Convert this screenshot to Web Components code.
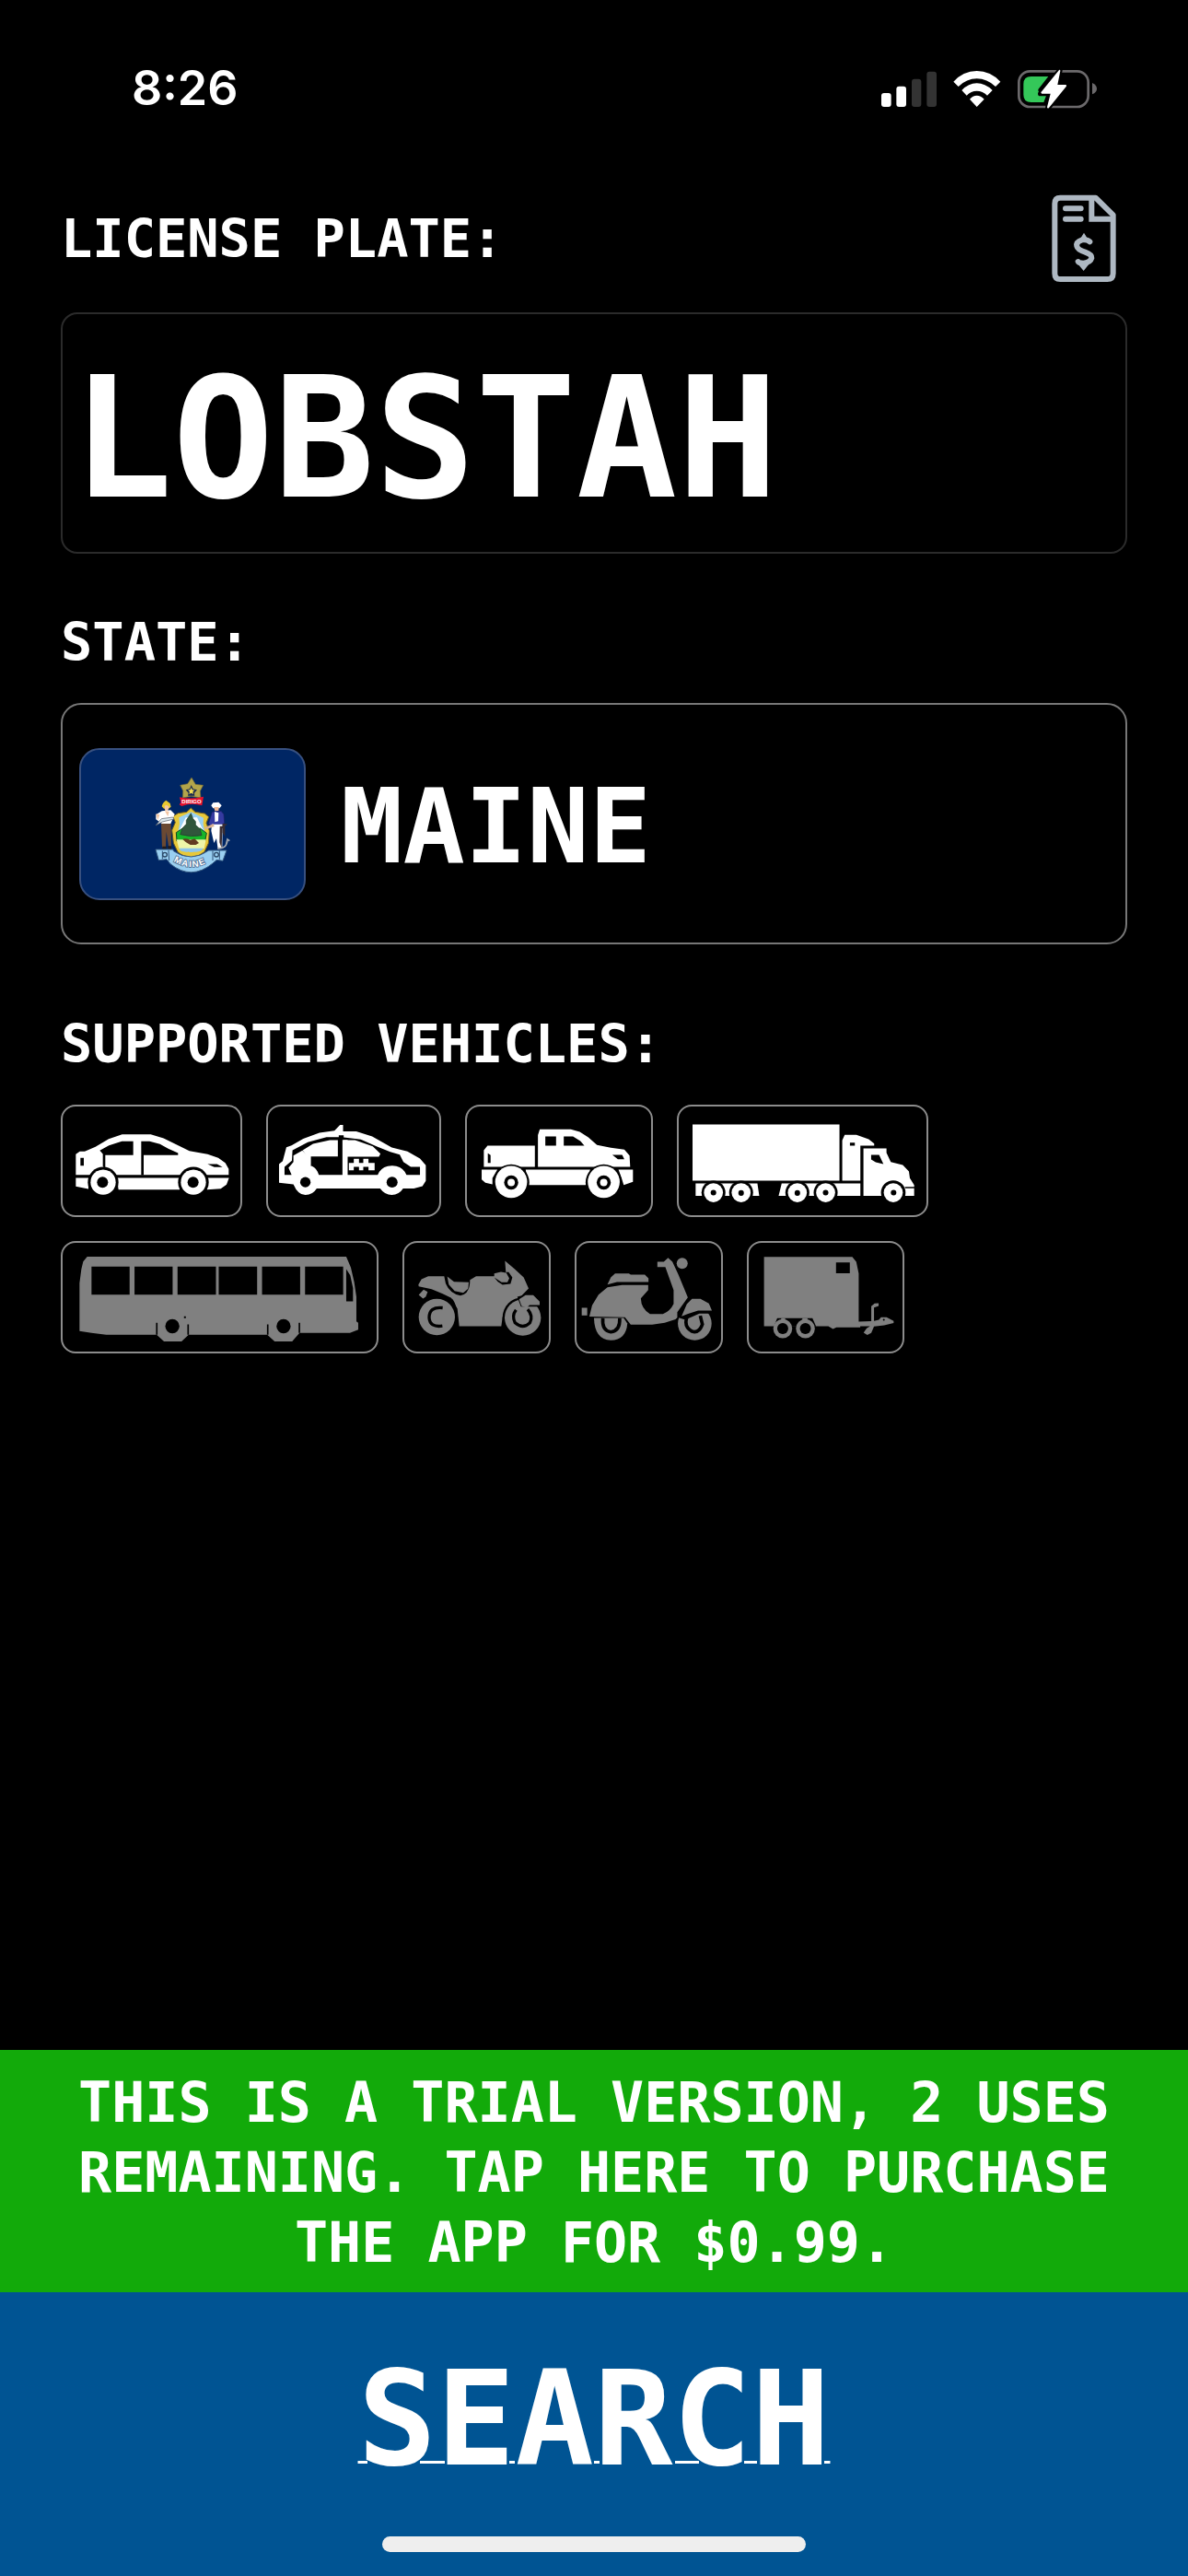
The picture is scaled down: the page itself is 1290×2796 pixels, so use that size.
<!DOCTYPE html>
<html lang="en">
<head>
<meta charset="utf-8">
<meta name="viewport" content="width=device-width, initial-scale=1">
<title>License Plate Search</title>
<style>
    body {
        margin: 0;
        background: #000;
        color: #fff;
        font-family: "DejaVu Sans Mono", monospace;
        font-weight: bold;
    }
</style>
</head>
<body>
<plate-app>
    <status-bar slot="status">8:26</status-bar>
    <plate-input value="LOBSTAH">LICENSE PLATE:</plate-input>
    <state-picker state="MAINE">STATE:</state-picker>
    <vehicle-list>
        SUPPORTED VEHICLES:
        <vehicle-card slot="cards" type="car"></vehicle-card>
        <vehicle-card slot="cards" type="taxi"></vehicle-card>
        <vehicle-card slot="cards" type="pickup"></vehicle-card>
        <vehicle-card slot="cards" type="semi"></vehicle-card>
        <vehicle-card slot="cards" type="bus" disabled></vehicle-card>
        <vehicle-card slot="cards" type="motorcycle" disabled></vehicle-card>
        <vehicle-card slot="cards" type="scooter" disabled></vehicle-card>
        <vehicle-card slot="cards" type="trailer" disabled></vehicle-card>
    </vehicle-list>
    <trial-banner slot="footer">THIS IS A TRIAL VERSION, 2 USES REMAINING. TAP HERE TO PURCHASE THE APP FOR $0.99.</trial-banner>
    <search-bar slot="footer">SEARCH</search-bar>
</plate-app>

<script>
    class PlateApp extends HTMLElement {
        constructor() {
            super();
            this.attachShadow({ mode: 'open' });
            this.shadowRoot.innerHTML = `
                <style>
                    :host {
                        display: flex;
                        flex-direction: column;
                        min-height: 100vh;
                    }

                    main {
                        flex: 1;
                        display: flex;
                        flex-direction: column;
                        gap: 56px;
                        padding: 63px 66px;
                    }
                </style>
                <slot name="status"></slot>
                <main><slot></slot></main>
                <slot name="footer"></slot>
            `;
        }
    }

    class StatusBar extends HTMLElement {
        constructor() {
            super();
            this.attachShadow({ mode: 'open' });
            this.shadowRoot.innerHTML = `
                <style>
                    :host {
                        display: flex;
                        justify-content: space-between;
                        align-items: center;
                        padding: 64px 99px 0 143px;
                        font: 600 52px/64px Inter, sans-serif;
                    }

                    svg {
                        display: block;
                    }
                </style>
                <slot></slot>
                <svg width="234" height="43" viewBox="81 42 702 129" role="img" aria-label="Signal, Wi-Fi, battery charging">
                    <g fill="#fff">
                        <rect x="81" y="120" width="32" height="45" rx="9"/>
                        <rect x="130" y="98" width="32" height="67" rx="9"/>
                        <rect x="180" y="74" width="31" height="91" rx="9" fill="#333"/>
                        <rect x="229" y="50" width="32" height="115" rx="9" fill="#333"/>
                        <path d="M316 83Q348 48 392 48T469 83L453 99Q425 73 392 73T332 99Z"/>
                        <path d="M343 111Q365 88 392 88T443 111L426 128Q411 113 392 113T359 128Z"/>
                        <path d="M369 140Q379 128 392 128T416 140L392 165Z"/>
                    </g>
                    <rect x="529" y="49" width="226" height="116" rx="36" fill="none" stroke="#6b696b" stroke-width="8"/>
                    <path d="M768 87Q783 94 783 106T768 124Z" fill="#6b696b"/>
                    <path d="M569 66H625L592 108Q590 121 611 122L619 126L610 150H569Q544 150 544 125V91Q544 66 569 66Z" fill="#34c759"/>
                    <path d="M663 45L655 90H686L623 171L630 122H599Z" fill="#fff" stroke="#000" stroke-width="16" stroke-linejoin="round"/>
                    <path d="M660 45Q664 43 664 48L655 93H682Q686 95 683 99L627 168Q622 172 621 166L632 122H604Q598 119 604 114Z" fill="#fff"/>
                </svg>
            `;
        }
    }

    class PlateInput extends HTMLElement {
        constructor() {
            super();
            this.attachShadow({ mode: 'open' });
            this.shadowRoot.innerHTML = `
                <style>
                    :host {
                        display: block;
                    }

                    .top {
                        display: flex;
                        justify-content: space-between;
                        align-items: center;
                        margin-bottom: 20px;
                        padding: 20px 12px 12px 0;
                    }

                    label {
                        font-size: 57px;
                        line-height: 80px;
                    }

                    button {
                        padding: 0;
                        border: 0;
                        background: none;
                    }

                    svg {
                        display: block;
                    }

                    input {
                        display: block;
                        box-sizing: border-box;
                        width: 100%;
                        height: 262px;
                        padding: 12px 10px 0;
                        border: 2px solid #2b2b2b;
                        border-radius: 18px;
                        background: #000;
                        color: inherit;
                        font: inherit;
                        font-size: 182px;
                    }
                </style>
                <div class="top">
                    <label for="plate"><slot></slot></label>
                    <button type="button" aria-label="Purchases">
                        <svg width="70" height="96" viewBox="65 35 210 288" fill="none" stroke="#aeb8c2" stroke-width="18">
                            <path d="M208 46H93Q75 46 75 65V292Q75 311 93 311H246Q265 311 265 292V102Z" stroke-linejoin="round"/>
                            <path d="M195 48V115H264"/>
                            <path d="M110 81H160M110 115H160" stroke-linecap="round"/>
                            <path d="M189 189Q181 181 164 183Q143 190 147 204Q149 215 174 223Q196 231 195 242Q191 257 168 259Q153 259 151 254" stroke-linecap="round"/>
                            <path d="M158 180L170 160L182 180ZM149 260L169 284L188 260Z" fill="#aeb8c2" stroke="none"/>
                        </svg>
                    </button>
                </div>
                <input id="plate" type="text" autocomplete="off">
            `;
        }

        connectedCallback() {
            this.shadowRoot.querySelector('input').value = this.getAttribute('value') || '';
        }
    }

    class StatePicker extends HTMLElement {
        constructor() {
            super();
            this.attachShadow({ mode: 'open' });
            this.shadowRoot.innerHTML = `
                <style>
                    :host {
                        display: block;
                    }

                    label {
                        display: block;
                        margin-bottom: 26px;
                        font-size: 57px;
                        line-height: 80px;
                    }

                    button {
                        display: flex;
                        align-items: center;
                        gap: 38px;
                        box-sizing: border-box;
                        width: 100%;
                        height: 262px;
                        padding: 0 18px;
                        border: 2px solid #777;
                        border-radius: 22px;
                        background: #000;
                        color: inherit;
                        font: inherit;
                        font-size: 112px;
                    }

                    span {
                        padding-top: 6px;
                    }
                </style>
                <label for="state"><slot></slot></label>
                <button id="state" type="button">
                    <maine-flag></maine-flag>
                    <span></span>
                </button>
            `;
        }

        connectedCallback() {
            this.shadowRoot.querySelector('span').textContent = this.getAttribute('state');
        }
    }

    class MaineFlag extends HTMLElement {
        constructor() {
            super();
            this.attachShadow({ mode: 'open' });
            this.shadowRoot.innerHTML = `
                <style>
                    :host {
                        display: block;
                        box-sizing: border-box;
                        border: 2px solid #38507f;
                        border-radius: 22px;
                        background: #002664;
                        overflow: hidden;
                    }

                    svg {
                        display: block;
                    }
                </style>
                <svg width="242" height="161" viewBox="-186 -51 726 483" aria-hidden="true">
                    <!-- star -->
                    <path d="M174 39L187 61L212 64L202 83L204 105L173 100L145 105L146 82L137 64L161 59Z" fill="#b3a54a" stroke="#6e6636" stroke-width="2"/>
                    <path d="M173 63L179 76L192 79L183 89L184 98H162L164 89L155 79L168 76Z" fill="#1b2b50"/>
                    <path d="M173 71L176 79L184 80L178 85L180 93L173 89L166 93L168 85L162 80L170 79Z" fill="#f3df55"/>
                    <path d="M135 103Q170 111 213 101L208 130Q175 119 142 132L134 127L139 120Z" fill="#e8112d"/>
                    <text x="174" y="122" fill="#fff" font-family="Liberation Sans" font-size="18" font-weight="bold" text-anchor="middle">DIRIGO</text>
                    <!-- shield -->
                    <path d="M172 138L186 151L217 156L230 167L222 187L232 212L229 253L216 281Q197 297 173 298Q146 297 129 281L115 252L110 210L121 185L113 166L130 155L158 151Z" fill="#e7c83a" stroke="#6c5920" stroke-width="3"/>
                    <path d="M133 169L173 151L213 170L212 190L219 225H128L135 190Z" fill="#9ad1f4"/>
                    <path d="M133 213L155 169L192 169L213 213Z" fill="#fff"/>
                    <path d="M124 218L145 204L173 213L202 204L223 220L218 246H126Z" fill="#16b629" stroke="#12471c" stroke-width="3"/>
                    <path d="M172 155L179 173L187 182L187 193L202 207L207 227Q173 234 137 224L144 204L157 190L157 178Z" fill="#31563c" stroke="#1b3c27" stroke-width="2"/>
                    <path d="M125 241H221L215 270H133Z" fill="#eef5a8"/>
                    <path d="M132 269H213L204 278Q172 286 140 278Z" fill="#8ec6eb"/>
                    <path d="M145 240Q152 235 170 242L184 238L198 252L188 258H170L155 249Z" fill="#633b22"/>
                    <path d="M162 279Q173 288 184 280L179 293H166Z" fill="#e7c83a"/>
                    <!-- farmer -->
                    <path d="M77 133Q80 119 91 113L104 123L107 134L97 142L84 140Z" fill="#e8c82f"/>
                    <path d="M86 131Q94 126 101 134L96 149H88Z" fill="#f3c6a4"/>
                    <path d="M77 148L106 145L119 158L113 173L106 189H77L58 175V160Z" fill="#fff"/>
                    <path d="M87 148L101 149L97 166ZM58 157L70 160L64 177Z" fill="#f3c6a4"/>
                    <path d="M57 195L76 173L113 168L117 174L79 183Z" fill="#dce8ee" stroke="#535964" stroke-width="2"/>
                    <path d="M75 189H107L108 264L100 270L92 216L90 268L78 266Z" fill="#6a4933"/>
                    <path d="M79 263L92 263V272H79ZM97 262H108V273H97Z" fill="#211b1b"/>
                    <!-- sailor -->
                    <path d="M238 130L244 121L262 119L272 130L265 139H244Z" fill="#fff"/>
                    <path d="M247 135H263L262 148H250Z" fill="#efb997"/>
                    <path d="M241 151L270 148L279 158L281 185L277 193H249L246 199L229 190Z" fill="#353ba0" stroke="#181e60" stroke-width="2"/>
                    <path d="M249 150L262 154L261 181L250 184Z" fill="#fff"/>
                    <path d="M240 191H275L274 267L260 272L255 237L247 252L238 212Z" fill="#fff"/>
                    <path d="M213 203L245 189L248 198L224 207Z" fill="#d7b092"/>
                    <path d="M275 188L292 191L283 196V231L275 219ZM266 197L280 197L274 205L272 269L265 250Z" fill="#392d32"/>
                    <path d="M259 269Q289 273 291 240L298 245M291 240L287 255" fill="none" stroke="#a2a9b1" stroke-width="5"/>
                    <!-- ribbon -->
                    <path d="M57 273H114L115 278Q173 317 230 276H288L276 310L256 307L242 319Q173 375 105 320L93 305L67 308Z" fill="#99cff1" stroke="#375b82" stroke-width="3"/>
                    <path d="M79 278V304M99 276L101 309M243 278V309M265 277V305" stroke="#315279" stroke-width="3"/>
                    <circle cx="87" cy="290" r="7" fill="#99cff1" stroke="#294563" stroke-width="4"/>
                    <circle cx="255" cy="290" r="7" fill="#99cff1" stroke="#294563" stroke-width="4"/>
                    <text x="115 140 165 177 202" y="312 325 330 331 326" rotate="26 13 2 -6 -22" fill="#fff" stroke="#4f6f94" stroke-width="5" paint-order="stroke" font-family="Liberation Sans" font-size="29" font-weight="bold">MAINE</text>
                </svg>
            `;
        }
    }

    class VehicleList extends HTMLElement {
        constructor() {
            super();
            this.attachShadow({ mode: 'open' });
            this.shadowRoot.innerHTML = `
                <style>
                    :host {
                        display: block;
                        padding-top: 12px;
                    }

                    h2 {
                        margin: 0 0 26px;
                        font-size: 57px;
                        line-height: 80px;
                    }

                    .cards {
                        display: flex;
                        flex-wrap: wrap;
                        gap: 26px;
                    }
                </style>
                <h2><slot></slot></h2>
                <div class="cards"><slot name="cards"></slot></div>
            `;
        }
    }

    // width in px, viewBox and shapes; everything is 118px high. class "h" is a hole
    const VEHICLES = {
        car: {
            label: 'Car', width: 193, box: '53 331 579 353',
            shapes: `
                <path d="M96 486L109 477H125L160 462L203 436L247 421H340L382 434L431 458L466 475L525 486L560 498L583 514L594 534V553H96Z"/>
                <path d="M96 563H137V599L96 591ZM229 563H434V601H235ZM523 563H595L587 585L568 598L523 601Z"/>
                <path class="h" d="M174 474L204 457L246 444H283V489H192V535L184 525V485ZM309 444H336L370 453L397 468L429 482V489H317V554H309ZM111 498H122V523H111ZM525 518H556L574 528H547Z"/>
                <circle class="h" cx="185" cy="577" r="50"/><circle class="h" cx="479" cy="577" r="50"/>
                <circle cx="185" cy="577" r="41"/><circle cx="479" cy="577" r="41"/>
                <circle class="h" cx="183" cy="577" r="18"/><circle class="h" cx="478" cy="577" r="18"/>`
        },
        taxi: {
            label: 'Taxi', width: 186, box: '723 331 559 353',
            shapes: `
                <path d="M759 518L771 508L783 463L800 457L838 435L891 416L940 409L958 390H968V411H1011L1063 428L1127 464L1178 477L1219 500L1238 522V573L1227 590L1199 598H1164Q1150 619 1127 619T1089 598H882Q869 619 845 619T806 584L759 579Z"/>
                <path class="h" d="M803 473L853 447L914 430H954V424H970V431L1026 438L1077 460L1122 478L1153 487L1165 511L1189 527H1219V553H1175Q1161 522 1127 523T1081 553H983V439H966V553H889Q881 527 858 522V493L849 487L835 474L806 490V511L790 530L800 553H777V527L801 507Z"/>
                <path d="M836 473L870 452L925 440H951V493H863V522L850 532V492ZM970 440H1007L1065 460L1090 484L1085 494H970ZM987 514H1003V501H1020V514H1034V501H1051V514H1071V538H1051V527H1034V538H1020V527H1003V538H987Z"/>
                <circle class="h" cx="845" cy="577" r="17"/><circle class="h" cx="1128" cy="577" r="18"/>`
        },
        pickup: {
            label: 'Pickup truck', width: 200, box: '22 17 599 353',
            shapes: `
                <path d="M77 159L89 144H243V213H77ZM253 213V110L259 91H360L389 99L417 117L445 142L490 151L534 157L551 176L553 213ZM70 222H121L105 250V270L82 265L70 254ZM213 222H423L408 272H222ZM515 222H562V262L532 272L525 250Z"/>
                <circle class="h" cx="166" cy="264" r="59"/><circle class="h" cx="467" cy="264" r="59"/>
                <path class="h" d="M277 114H312V144H277ZM337 114H367L391 129L404 144H337ZM90 169L99 175V200H90ZM495 174H527L534 188H513Z"/>
                <circle cx="166" cy="262" r="52"/><circle cx="467" cy="262" r="52"/>
                <circle class="h" cx="166" cy="264" r="23"/><circle class="h" cx="467" cy="264" r="23"/>
                <circle cx="166" cy="264" r="12"/><circle cx="467" cy="264" r="12"/>`
        },
        semi: {
            label: 'Semi truck', width: 269, box: '712 17 806 353',
            shapes: `
                <path d="M757 75H1235V258H757ZM1244 258V127L1252 109H1290L1330 123L1348 137V144H1303V258ZM1313 307V153H1388V167L1402 197L1441 207L1461 228L1464 250L1478 272V307Z"/>
                <path d="M767 267H885V307H767ZM874 267H968L974 307H867ZM1047 267H1158V307H1037ZM1137 267H1303V307H1145Z"/>
                <path class="h" d="M1338 174H1364L1378 204L1353 198L1338 189ZM1269 134H1285V144H1269ZM1448 278H1479V283H1448Z"/>
                <circle class="h" cx="825" cy="297" r="39"/><circle class="h" cx="915" cy="297" r="39"/>
                <circle class="h" cx="1098" cy="297" r="39"/><circle class="h" cx="1190" cy="297" r="39"/><circle class="h" cx="1410" cy="297" r="40"/>
                <circle cx="825" cy="297" r="31"/><circle cx="915" cy="297" r="31"/>
                <circle cx="1098" cy="297" r="31"/><circle cx="1190" cy="297" r="31"/><circle cx="1410" cy="297" r="31"/>
                <g class="h"><circle cx="825" cy="297" r="9"/><circle cx="915" cy="298" r="9"/><circle cx="1098" cy="298" r="9"/><circle cx="1190" cy="297" r="9"/><circle cx="1411" cy="297" r="9"/></g>`
        },
        bus: {
            label: 'Bus', width: 341, box: '53 775 1022 353',
            shapes: `
                <path d="M120 835L133 820H976L991 855L1002 903L1009 950V1030L1015 1035V1057L988 1068H824L800 1095H743L719 1074H463L440 1095H383L359 1074H195L147 1068L108 1062V906L114 860Z"/>
                <path class="h" d="M147 852H271V943H147ZM287 852H411V943H287ZM427 852H552V943H427ZM561 852H686V943H561ZM702 852H826V943H702ZM842 852H966V943H842ZM976 860L989 880L998 922V965H976ZM357 1035H362V1074H357ZM459 1040H464V1074H459ZM718 1040H723V1074H718ZM821 1035H826V1068H821ZM448 1014H454V1020H448Z"/>
                <circle class="h" cx="410" cy="1046" r="23"/><circle class="h" cx="772" cy="1046" r="23"/>`
        },
        motorcycle: {
            label: 'Motorcycle', width: 157, box: '25 25 471 353',
            shapes: `
                <path d="M71 160L81 143L103 133H155L160 157Q174 190 208 196Q239 192 239 145L259 133H318V124L340 119L356 122L353 83L384 109L414 137L430 173L397 207L364 238L345 267L341 296H204L198 239L178 204L150 190L114 175L72 166Z"/>
                <path d="M165 134L187 151L235 153L233 174L217 187L189 181L170 160ZM72 194L88 177L101 184L95 200L86 206Z"/>
                <circle cx="131" cy="266" r="59"/><path class="h" d="M180 205Q199 225 201 296H194V239L180 217Z"/>
                <path d="M150 236Q106 231 106 268Q108 301 149 295" fill="none" stroke="#000" stroke-width="10"/>
                <circle class="h" cx="411" cy="268" r="66"/><circle cx="411" cy="268" r="59"/>
                <path class="h" d="M393 200L405 232H475V213L437 189Z"/>
                <path d="M399 208L420 195H445L466 216V227H433L424 236L407 230Z"/>
                <path d="M389 243Q374 263 386 285Q411 307 434 285Q446 263 427 241" fill="none" stroke="#000" stroke-width="10"/>
                <path class="h" d="M318 137L342 153H361L367 140L356 120H365L377 137L371 158L345 161L330 151Z"/>`
        },
        scooter: {
            label: 'Scooter', width: 157, box: '586 25 472 353',
            shapes: `
                <path d="M687 160L698 137L712 124H757L763 128H809L821 140V152H718Z"/>
                <path d="M687 169L735 162H820V178L796 205Q797 239 826 256H868Q892 247 903 223V178L876 103H850V86H871L885 73L899 86L918 126L951 206L935 249L909 274L874 285L833 291H763L744 267L628 265L637 228L658 193Z"/>
                <path d="M603 236H621V261H603Z"/><circle cx="931" cy="91" r="18"/>
                <path d="M643 269H740L752 287Q748 341 698 342Q645 340 643 269Z"/>
                <path d="M672 270Q668 311 698 315Q729 311 727 270" fill="none" stroke="#000" stroke-width="11"/>
                <circle cx="972" cy="287" r="55"/>
                <path class="h" d="M915 250L951 200L1037 245V255H987L941 275L915 267Z"/>
                <path d="M929 264L946 224L963 207H991L1018 222L1028 245H983L948 256Z"/>
                <path d="M946 268Q936 298 963 313Q986 320 997 290L990 262" fill="none" stroke="#000" stroke-width="11"/>`
        },
        trailer: {
            label: 'Trailer', width: 167, box: '22 25 502 353',
            shapes: `
                <path d="M72 70H360L373 86L381 124V281L422 280V231L433 222L446 221V230L431 235V279L447 275L454 267H472L495 279V286L464 293L431 297L422 318L409 325L397 317L407 303L418 296H386V300H308L297 305L282 296H72Z"/>
                <path class="h" d="M307 88H352V123H307ZM104 297L115 270H230L242 297Z"/>
                <path d="M128 270H141V281H128ZM197 270H214V281H197Z"/>
                <circle cx="133" cy="304" r="31"/><circle cx="207" cy="304" r="31"/>
                <circle class="h" cx="133" cy="304" r="18"/><circle class="h" cx="207" cy="304" r="18"/>
                <circle class="h" cx="463" cy="275" r="3"/>`
        }
    };

    class VehicleCard extends HTMLElement {
        constructor() {
            super();
            this.attachShadow({ mode: 'open' });
        }

        connectedCallback() {
            const vehicle = VEHICLES[this.getAttribute('type')];
            this.shadowRoot.innerHTML = `
                <style>
                    :host {
                        display: block;
                        border: 2px solid #8c8c8c;
                        border-radius: 16px;
                        color: #fff;
                    }

                    :host([disabled]) {
                        color: #808080;
                    }

                    svg {
                        display: block;
                        fill: currentColor;
                    }

                    .h {
                        fill: #000;
                    }
                </style>
                <svg width="${vehicle.width}" height="118" viewBox="${vehicle.box}" role="img" aria-label="${vehicle.label}">${vehicle.shapes}</svg>
            `;
        }
    }

    class TrialBanner extends HTMLElement {
        constructor() {
            super();
            this.attachShadow({ mode: 'open' });
            this.shadowRoot.innerHTML = `
                <style>
                    :host {
                        display: block;
                    }

                    a {
                        display: block;
                        padding: 19px 66px 16px;
                        background: #12aa0a;
                        color: #fff;
                        font-size: 60px;
                        line-height: 76px;
                        text-align: center;
                        text-decoration: none;
                    }
                </style>
                <a href="#purchase"><slot></slot></a>
            `;
        }
    }

    class SearchBar extends HTMLElement {
        constructor() {
            super();
            this.attachShadow({ mode: 'open' });
            this.shadowRoot.innerHTML = `
                <style>
                    :host {
                        display: block;
                        background: #005493;
                    }

                    button {
                        display: block;
                        width: 100%;
                        padding: 48px 0 37px;
                        border: 0;
                        background: none;
                        color: #fff;
                        font: inherit;
                        font-size: 142px;
                        line-height: 180px;
                        text-decoration: underline 3px;
                        text-underline-offset: -4px;
                    }

                    .home {
                        width: 460px;
                        max-width: 60%;
                        height: 17px;
                        margin: 0 auto 26px;
                        border-radius: 9px;
                        background: #eee;
                    }
                </style>
                <button type="button"><slot></slot></button>
                <div class="home"></div>
            `;
        }
    }

    customElements.define('plate-app', PlateApp);
    customElements.define('status-bar', StatusBar);
    customElements.define('plate-input', PlateInput);
    customElements.define('state-picker', StatePicker);
    customElements.define('maine-flag', MaineFlag);
    customElements.define('vehicle-list', VehicleList);
    customElements.define('vehicle-card', VehicleCard);
    customElements.define('trial-banner', TrialBanner);
    customElements.define('search-bar', SearchBar);
</script>
</body>
</html>
